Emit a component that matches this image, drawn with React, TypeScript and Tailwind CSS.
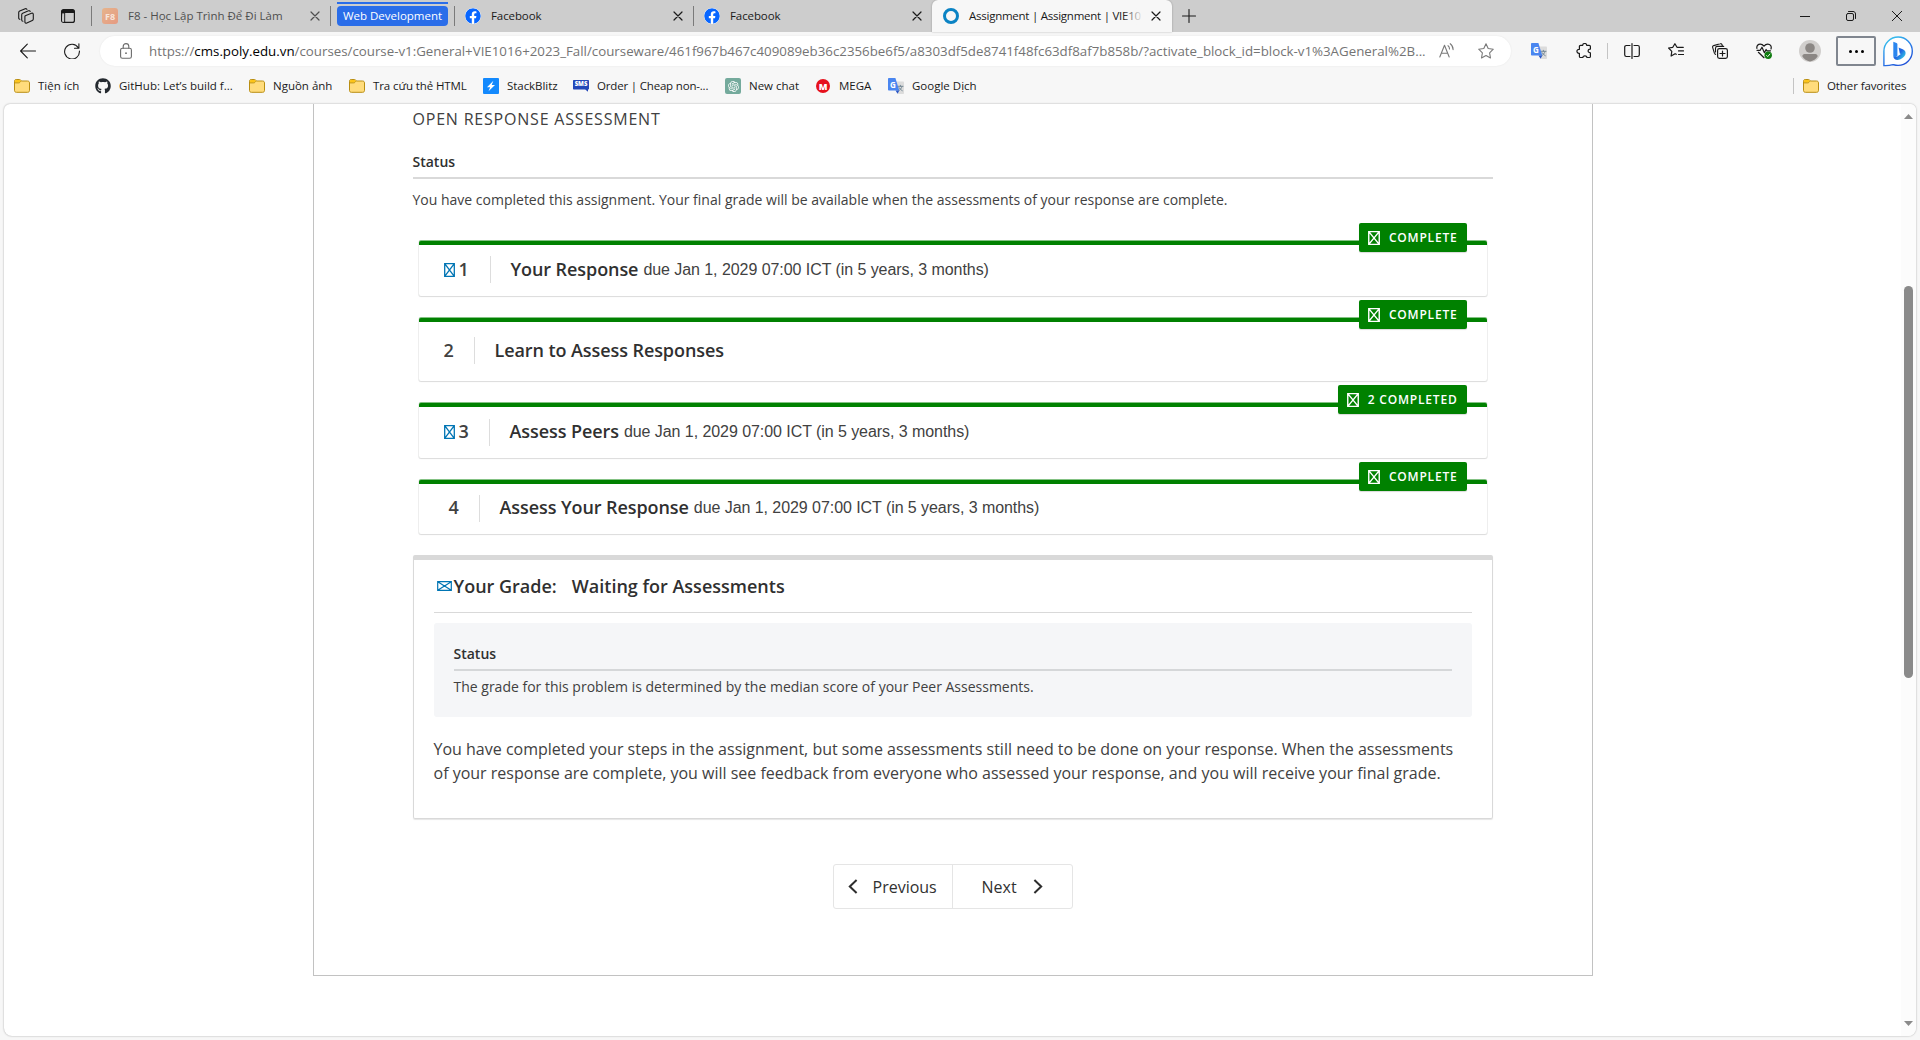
import React from "react";
import { FaFacebook, FaGithub } from "react-icons/fa";
import { RiOpenaiFill } from "react-icons/ri";

/* ---------- browser icons ---------- */

const line = {
  fill: "none",
  stroke: "currentColor",
  strokeLinecap: "round" as const,
  strokeLinejoin: "round" as const,
};

const FolderIcon = () => (
  <svg className="size-4 shrink-0" viewBox="0 0 16 16">
    <path d="M.5 3.2C.5 2 1.100 1.500 2.200 1.500h3.300c.7 0 1 .3 1.400.8l.6.700h6c1.300 0 2 .7 2 2v7.300c0 1.400-.7 2-2 2h-11c-1.300 0-2-.6-2-2z" fill="#ffdc7c" stroke="#b98e12" />
    <path d="M1 3.200C1 2.400 1.500 2 2.200 2h3.200c.7 0 1.100.6 1.600 1.200L5.800 4.300c-.3.300-.6.400-1 .4H1z" fill="#fcc419" />
    <path d="M.9 4.900h3.800c.5 0 .9-.2 1.200-.5l1.300-1.300" fill="none" stroke="#b98e12" strokeWidth=".9" />
  </svg>
);

const TranslateIcon = () => (
  <span className="relative block size-4 shrink-0">
    <svg className="size-4" viewBox="0 0 16 16">
      <path d="M6 3.500h9.200c.5 0 .8.3.8.800v10.900c0 .5-.3.800-.8.800H10z" fill="#dcdcdc" />
      <path d="M9.800 8.300h5.200M12.400 7.300v1M14 8.500c-.5 2-1.900 3.300-3.200 4.100M11 9.600c.7 1.300 1.900 2.400 3.300 3.100" {...line} stroke="#6d8290" strokeWidth=".9" />
      <path d="M.8 0h6.600l3.900 12.500H.8c-.5 0-.8-.3-.8-.8V.8C0 .3.300 0 .8 0z" fill="#4a86f0" />
      <path d="M7.500 12.500h3.800L9.600 15.700z" fill="#2a56c6" />
    </svg>
    <span className="absolute left-[2px] top-[2px] text-[8px] font-bold leading-[9px] text-white">G</span>
  </span>
);

const CloseIcon = () => (
  <svg className="size-[10px] shrink-0" viewBox="0 0 10 10">
    <path d="M1 1l8 8M9 1L1 9" {...line} strokeWidth="1.200" />
  </svg>
);

/* ---------- tab strip ---------- */

function Separator() {
  return <span className="h-5 w-px shrink-0 bg-[#7a7a7a]" />;
}

function Tab({ icon, title, width }: { icon: React.ReactNode; title: string; width: string }) {
  return (
    <div className={`flex h-8 shrink-0 items-center pl-[10px] pr-[10px] ${width}`}>
      {icon}
      <span className="ml-[10px] flex-1 whitespace-nowrap pb-px">{title}</span>
      <CloseIcon />
    </div>
  );
}

function TabStrip() {
  return (
    <div className="flex h-8 items-center bg-[#cdcdcd] text-[11.5px] leading-[17px] text-[#1a1a1a]">
      <div className="flex w-[91px] shrink-0 items-center pl-[18px]">
        <svg className="size-4" viewBox="0 0 16 16">
          <g {...line} strokeWidth="1.100">
            <path d="M7.300 7.700l6.200-2.500c.9-.3 1.800.2 1.800 1.200v4.700c0 .7-.3 1.200-1 1.500l-5.500 2.500c-.9.4-1.900-.1-1.900-1.100V8.600c0-.4.1-.7.4-.9z" />
            <path d="M4.900 13.300c-.7 0-1.200-.5-1.200-1.200V6.800c0-.7.300-1.200 1-1.500l5.800-2.500c.8-.3 1.500 0 1.700.7" />
            <path d="M1.900 11.200c-.7 0-1.200-.5-1.200-1.200V4.600c0-.7.300-1.200 1-1.500L7.200.7c.8-.3 1.500 0 1.700.7" />
          </g>
        </svg>
        <svg className="ml-[27px] size-[14px]" viewBox="0 0 14 14">
          <rect x=".6" y=".6" width="12.800" height="12.800" rx="2" {...line} strokeWidth="1.200" />
          <path d="M.6 4V2.600c0-1.200.8-2 2-2h8.800c1.200 0 2 .8 2 2V4zM.6 4h3.200v9.400" fill="currentColor" stroke="none" />
          <path d="M3.600 4v9" {...line} strokeWidth="1.100" />
          <rect x="1.200" y="4.400" width="2" height="8.200" fill="#cdcdcd" />
        </svg>
      </div>
      <Separator />
      <Tab
        width="w-[238px] text-[#4f4f4f]"
        title="F8 - Học Lập Trình Để Đi Làm"
        icon={
          <span className="grid size-4 place-items-center rounded-[3px] bg-linear-to-br from-[#e6b48c] to-[#e59a82] text-[9px] font-bold leading-none text-[#f8e4da]">
            F8
          </span>
        }
      />
      <Separator />
      <div className="flex h-8 w-[123px] shrink-0 flex-col items-start pl-[6px] pt-[2px]">
        <span className="h-[2px] w-[111px] bg-[#2a6de9]" />
        <span className="mt-[2px] flex h-5 w-[111px] items-center justify-center rounded-[4px] bg-[#2a6de9] pb-px text-white">
          Web Development
        </span>
      </div>
      <Separator />
      <Tab width="w-[238px] tracking-[-0.1px]" title="Facebook" icon={<FaFacebook className="size-4 rounded-full bg-white text-[#0866ff]" />} />
      <Separator />
      <Tab width="w-[238px] tracking-[-0.1px]" title="Facebook" icon={<FaFacebook className="size-4 rounded-full bg-white text-[#0866ff]" />} />
      <div className="flex h-8 w-[240px] shrink-0 items-center rounded-t-[6px] bg-[#f7f7f7] pl-[11px] pr-[11px] shadow-[0_0_2px_rgba(0,0,0,0.3)]">
        <span className="size-4 shrink-0 rounded-full border-[3px] border-[#0b83c4]" />
        <span className="relative ml-[10px] w-[174px] whitespace-nowrap pb-px tracking-[-0.25px]">
          Assignment | Assignment | VIE10
          <span className="absolute inset-y-0 right-0 w-5 bg-linear-to-r from-transparent to-[#f7f7f7]" />
        </span>
        <span className="ml-auto flex">
          <CloseIcon />
        </span>
      </div>
      <svg className="ml-[10px] size-[14px]" viewBox="0 0 14 14">
        <path d="M7 .5v13M.5 7h13" {...line} strokeWidth="1.100" />
      </svg>
      <div className="ml-auto flex items-center gap-9 pr-[18px]">
        <svg className="size-[10px]" viewBox="0 0 10 10">
          <path d="M0 5.500h10" stroke="currentColor" />
        </svg>
        <svg className="size-[10px]" viewBox="0 0 10 10">
          <rect x=".5" y="2.500" width="7" height="7" rx="1.500" {...line} />
          <path d="M2.500.5H7c1.500 0 2.500 1 2.500 2.500v4.500" {...line} />
        </svg>
        <svg className="size-[10px]" viewBox="0 0 10 10">
          <path d="M.3.3l9.400 9.400M9.700.3L.3 9.700" {...line} />
        </svg>
      </div>
    </div>
  );
}

/* ---------- address bar ---------- */

function Toolbar() {
  return (
    <div className="flex h-[38px] items-center text-[#1a1a1a]">
      <svg className="ml-5 size-4 shrink-0" viewBox="0 0 16 16">
        <path d="M15.500 8H.7M7.300 1.200L.6 8l6.700 6.800" {...line} strokeWidth="1.100" />
      </svg>
      <svg className="ml-7 size-4 shrink-0" viewBox="0 0 16 16">
        <path d="M14.300 4.700A7.400 7.400 0 1 0 15.400 8M14.900.8v4.400h-4.400" {...line} strokeWidth="1.100" />
      </svg>
      <div className="ml-5 flex h-[30px] w-[1411px] shrink-0 items-center rounded-full bg-white pl-5 shadow-[0_0_2px_rgba(0,0,0,0.08)]">
        <svg className="h-4 w-3 shrink-0 text-[#6b6b6b]" viewBox="0 0 12 16">
          <rect x=".6" y="5.200" width="10.800" height="10" rx="1.800" {...line} strokeWidth="1.100" />
          <path d="M3.200 5.200V3.400a2.800 2.800 0 0 1 5.600 0v1.800" {...line} strokeWidth="1.100" />
          <circle cx="6" cy="10.200" r=".9" fill="currentColor" />
        </svg>
        <span className="ml-[17px] w-[1278px] shrink-0 whitespace-nowrap text-[13.3px] leading-[18px] text-[#747474]">
          https://<span className="text-black">cms.poly.edu.vn</span>
          /courses/course-v1:General+VIE1016+2023_Fall/courseware/461f967b467c409089eb36c2356be6f5/a8303df5de8741f48fc63df8af7b858b/?activate_block_id=block-v1%3AGeneral%2B...
        </span>
        <svg className="ml-3 size-4 shrink-0 text-[#7a7a7a]" viewBox="0 0 16 16">
          <path d="M.8 14L5.500 2.300 10.200 14M2.300 10.200h6.400" {...line} strokeWidth="1.100" />
          <path d="M9 2.700c.9.600 1.500 1.800 1.500 3.200M11.200.7c1.800 1.200 2.900 3.300 2.900 5.900" {...line} strokeWidth="1.100" />
        </svg>
        <svg className="ml-[23px] size-4 shrink-0 text-[#7a7a7a]" viewBox="0 0 16 16">
          <path d="M8 .8l2.200 4.700 5.100.7-3.700 3.600.9 5.200L8 12.500 3.500 15l.9-5.200L.7 6.200l5.100-.7z" {...line} strokeWidth="1.100" />
        </svg>
      </div>
      <div className="ml-5 flex items-center">
        <TranslateIcon />
        <svg className="ml-[29px] size-4" viewBox="0 0 16 16">
          <path d="M4.500 2.300h2.200c0-2.400 4-2.400 4 0h2.600c.7 0 1.100.4 1.100 1.100v2.700c-2.700-.6-3.300 3.800 0 3.700v3.600c0 .7-.4 1.100-1.100 1.100h-2.400c.1-2-4-2.300-4 0H4.500c-.7 0-1.100-.4-1.100-1.100V10.300c-3.300.4-3.300-4.400 0-4V3.400c0-.7.400-1.100 1.100-1.100z" {...line} strokeWidth="1.200" />
        </svg>
        <span className="ml-[15px] h-4 w-px bg-[#c4c4c4]" />
        <svg className="ml-4 size-4" viewBox="0 0 16 16">
          <path d="M6 2.500H2.300C1.300 2.500.700 3.200.7 4.100v7.700c0 1 .6 1.700 1.600 1.700H6M10 2.500h3.700c1 0 1.600.7 1.600 1.600v7.700c0 1-.6 1.700-1.600 1.700H10M8 .6v14.800" {...line} strokeWidth="1.200" />
        </svg>
        <svg className="ml-7 size-4" viewBox="0 0 16 16">
          <path d="M8.300 11.300l-1.200-.6-4 2.300.7-4.700L.6 5l4.200-.7L6.900.7l2.100 3.600h6.300M10.500 7.900h5M10.500 11.500h5" {...line} strokeWidth="1.200" />
        </svg>
        <svg className="ml-7 size-4" viewBox="0 0 16 16">
          <rect x="5.600" y="5.600" width="9.800" height="9.800" rx="1.800" {...line} strokeWidth="1.200" />
          <path d="M10.500 8v5M8 10.500h5" {...line} strokeWidth="1.200" />
          <path d="M3.600 11.400c-.7-.2-1-.6-1.200-1.200L.7 4.600c-.3-.9.1-1.700 1-2L8 .8c.9-.3 1.700.1 2 1l.6 1.600M3.500 9V5.300c0-1.200.7-1.900 1.900-1.900h6.300" {...line} strokeWidth="1.100" />
        </svg>
        <svg className="ml-7 size-4" viewBox="0 0 16 16">
          <path d="M.9 5.400c-.5-2.700 1.300-4.300 3.300-4.300C6 1.100 7.100 2 8 3.200 8.900 2 10 1.100 11.800 1.100c2.200 0 4.100 2 3.200 4.900M1 7.300h3.200L6 4.200l2.400 5.500 1.700-3.200.9 1.300h3.500M2.400 9.300L8 14.700" {...line} strokeWidth="1.200" />
          <circle cx="12.200" cy="12.300" r="3.700" fill="#107c10" />
          <path d="M10.600 12.500l1.100 1.100 2.200-2.500" {...line} stroke="#fff" strokeWidth=".9" />
        </svg>
        <svg className="ml-[27px] size-[22px]" viewBox="0 0 22 22">
          <circle cx="11" cy="11" r="11" fill="#d1cfcd" />
          <circle cx="11" cy="8" r="4.800" fill="#8b8784" />
          <path d="M3.300 16.300c0-1.300 1-2.300 2.300-2.300h10.800c1.300 0 2.300 1 2.300 2.300A11 11 0 0 1 11 21.500a11 11 0 0 1-7.700-5.200z" fill="#8b8784" />
        </svg>
        <span className="ml-[15px] flex h-[30px] w-10 items-center justify-center gap-[3px] rounded-[2px] border-2 border-[#80868f]">
          <span className="size-[3px] rounded-full bg-black" />
          <span className="size-[3px] rounded-full bg-black" />
          <span className="size-[3px] rounded-full bg-black" />
        </span>
        <svg className="ml-[7px] h-[31px] w-[30px]" viewBox="0 0 30 31">
          <defs>
            <linearGradient id="ring" x1="0" y1="0" x2=".6" y2="1">
              <stop offset="0" stopColor="#39d0ee" />
              <stop offset=".6" stopColor="#2a7de8" />
              <stop offset="1" stopColor="#2355d8" />
            </linearGradient>
            <linearGradient id="bee" x1="0" y1="0" x2="1" y2=".8">
              <stop offset="0" stopColor="#2b8bf0" />
              <stop offset=".5" stopColor="#2062e0" />
              <stop offset="1" stopColor="#36d3e6" />
            </linearGradient>
          </defs>
          <path d="M.9 29.600V15.200A14.200 14.200 0 1 1 15 29.400c-2.200 0-3.400-.4-5-.8-3 .8-6 1.200-9.100 1z" fill="#fff" stroke="url(#ring)" strokeWidth="1.400" />
          <path d="M10.300 5.800l3.200 1.300c.6.300.9.700.9 1.300v10.800l-1.900 3.300c-1.300-.5-2.200-1.300-2.200-3z" fill="#2b86ee" />
          <path d="M15.600 11.500l4.600 2.100c2.200 1.100 3 3.300 2 5.500-1.200 2.700-4.400 4.500-7.500 5-2.300.2-4-1.200-4.300-3.500 1 1 2.600.9 3.900 0l3.600-2.500-1.100-.7z" fill="url(#bee)" />
        </svg>
      </div>
    </div>
  );
}

/* ---------- bookmarks bar ---------- */

function Bookmark({ icon, label, width }: { icon: React.ReactNode; label: string; width: string }) {
  return (
    <div className={`flex shrink-0 items-center gap-2 whitespace-nowrap ${width}`}>
      {icon}
      <span className="pb-px">{label}</span>
    </div>
  );
}

function BookmarksBar() {
  return (
    <div className="flex h-8 items-center pl-[14px] pr-[14px] text-[11.5px] leading-[17px] text-[#1a1a1a]">
      <Bookmark width="w-[81px]" label="Tiện ích" icon={<FolderIcon />} />
      <Bookmark width="w-[154px]" label="GitHub: Let’s build f..." icon={<FaGithub className="size-4 text-[#24292f]" />} />
      <Bookmark width="w-[100px]" label="Nguồn ảnh" icon={<FolderIcon />} />
      <Bookmark width="w-[134px] tracking-[-0.1px]" label="Tra cứu thẻ HTML" icon={<FolderIcon />} />
      <Bookmark
        width="w-[90px] tracking-[-0.05px]"
        label="StackBlitz"
        icon={
          <svg className="size-4 shrink-0" viewBox="0 0 16 16">
            <rect width="16" height="16" rx="1" fill="#1389fd" />
            <path d="M4 9.200h3.200L5.500 13.300 12 6.900H8.700l1.700-4.100z" fill="#fff" />
          </svg>
        }
      />
      <Bookmark
        width="w-[152px] tracking-[-0.18px]"
        label="Order | Cheap non-..."
        icon={
          <span className="relative h-3 w-4 shrink-0">
            <svg className="block h-3 w-4" viewBox="0 0 16 12">
              <path d="M1 0h14c.6 0 1 .4 1 1v7.500c0 .6-.4 1-1 1v2.300l-2.800-2.300H1c-.6 0-1-.4-1-1V1c0-.6.4-1 1-1z" fill="#2346b8" />
            </svg>
            <span className="absolute inset-x-0 top-[1px] text-center text-[6px] font-extrabold leading-[7px] tracking-normal text-white">SMS</span>
          </span>
        }
      />
      <Bookmark
        width="w-[90px]"
        label="New chat"
        icon={
          <span className="grid size-4 place-items-center rounded-[2px] bg-[#74aa9c]">
            <RiOpenaiFill className="size-[13px] text-white" />
          </span>
        }
      />
      <Bookmark
        width="w-[73px]"
        label="MEGA"
        icon={
          <span className="mx-px grid size-[14px] place-items-center rounded-full bg-[#e6111c] text-[9px] font-extrabold leading-none text-white">
            M
          </span>
        }
      />
      <Bookmark width="w-[100px]" label="Google Dịch" icon={<TranslateIcon />} />
      <span className="ml-auto mr-[9px] h-4 w-px bg-[#c4c4c4]" />
      <Bookmark width="w-[103px] tracking-[-0.1px]" label="Other favorites" icon={<FolderIcon />} />
    </div>
  );
}

/* ---------- assignment page ---------- */

/* Box drawn in place of an icon-font glyph that is not available. */
function MissingGlyph({ className }: { className: string }) {
  return (
    <svg className={className} viewBox="0 0 11 14" preserveAspectRatio="none">
      <path d="M.7.700h9.600v12.600H.7zM.7.700l9.600 12.600M10.300.7L.7 13.300" fill="none" stroke="currentColor" strokeWidth="1.300" />
    </svg>
  );
}

type Step = {
  number: string;
  numberBox: string;
  title: string;
  due?: string;
  status: string;
  edited?: boolean;
  card: string;
  text: string;
  dueLine: string;
};

const DUE = "due Jan 1, 2029 07:00 ICT (in 5 years, 3 months)";

const STEPS: Step[] = [
  { number: "1", numberBox: "w-[71px] pl-[25px]", title: "Your Response", due: DUE, status: "COMPLETE", edited: true, card: "h-[55px] pt-[11px]", text: "pt-px", dueLine: "leading-[27px]" },
  { number: "2", numberBox: "w-[55px] pl-[25px]", title: "Learn to Assess Responses", status: "COMPLETE", card: "h-[63px] pt-[15px]", text: "pt-px", dueLine: "leading-[27px]" },
  { number: "3", numberBox: "w-[70px] pl-[25px]", title: "Assess Peers", due: DUE, status: "2 COMPLETED", edited: true, card: "h-[55px] pt-3", text: "", dueLine: "leading-[25px]" },
  { number: "4", numberBox: "w-[60px] pl-[30px]", title: "Assess Your Response", due: DUE, status: "COMPLETE", card: "h-[54px] pt-[11px]", text: "", dueLine: "leading-[25px]" },
];

function StepCard({ step }: { step: Step }) {
  return (
    <section
      className={`relative rounded-[2px] border-t-[4px] border-[#008100] bg-white shadow-[0_-1px_0_#84c284,0_1px_1px_#dcdcdc,0_0_0_1px_#f0f0f0] ${step.card}`}
    >
      <div className="flex h-[27px] whitespace-nowrap text-lg leading-6 font-semibold text-[#303030]">
        <div className={`flex shrink-0 ${step.numberBox} ${step.text}`}>
          {step.edited && <MissingGlyph className="mr-1 mt-[6px] h-[14px] w-[11px] shrink-0 text-[#0075b4]" />}
          <span className="text-[#414141]">{step.number}</span>
        </div>
        <span className="h-[27px] w-px shrink-0 bg-[#dddddd]" />
        <h3 className={`ml-5 tracking-[-0.08px] ${step.text}`}>{step.title}</h3>
        {step.due && (
          <span className={`ml-[5px] font-['Liberation_Sans',sans-serif] text-base font-normal tracking-[-0.06px] text-[#414141] ${step.dueLine}`}>
            {step.due}
          </span>
        )}
      </div>
      <div className="absolute -top-[22px] right-5 flex h-[29px] items-center rounded-[2px] bg-[#008100] pl-[9px] pr-[9px] text-xs leading-[17px] font-semibold tracking-[0.8px] text-white shadow-[0_1px_1px_rgba(0,0,0,0.15)]">
        <MissingGlyph className="mr-[9px] h-[14px] w-3 shrink-0" />
        {step.status}
      </div>
    </section>
  );
}

function GradeBox() {
  return (
    <section className="mt-[21px] h-[264px] rounded-[2px] border border-t-[5px] border-[#d9d9d9] px-5 pt-[14px] shadow-[0_1px_1px_rgba(0,0,0,0.1)]">
      <div className="flex h-[39px] whitespace-nowrap border-b border-[#d9d9d9] text-lg leading-6 font-semibold text-[#303030]">
        <svg className="ml-[3px] mt-[7px] h-[10px] w-[15px] text-[#0075b4]" viewBox="0 0 15 10">
          <path d="M.7.700h13.600v8.600H.7zM.7.700l13.600 8.600M14.300.7L.7 9.300" fill="none" stroke="currentColor" strokeWidth="1.200" />
        </svg>
        <span className="ml-[2px]">Your Grade:</span>
        <span className="ml-[15px]">Waiting for Assessments</span>
      </div>
      <div className="mt-[10px] h-[94px] rounded-[3px] bg-[#f5f6f8] px-5 pt-[21px] text-sm leading-[19px]">
        <h4 className="h-[27px] border-b-2 border-[#d5d7d9] font-semibold text-[#303030]">Status</h4>
        <p className="mt-[6px]">The grade for this problem is determined by the median score of your Peer Assessments.</p>
      </div>
      <p className="mt-5 whitespace-nowrap text-base leading-6">
        You have completed your steps in the assignment, but some assessments still need to be done on your response. When the assessments
        <br />
        of your response are complete, you will see feedback from everyone who assessed your response, and you will receive your final grade.
      </p>
    </section>
  );
}

function Pager() {
  return (
    <nav className="mx-auto mt-[45px] flex h-[45px] w-[240px] rounded-[3px] border border-[#e5e5e5] text-base leading-6 text-[#414141]">
      <button className="flex w-[119px] items-center border-r border-[#e5e5e5] pl-[14px]">
        <svg className="h-[15px] w-[10px]" viewBox="0 0 10 15">
          <path d="M8.600 1L1.800 7.500l6.800 6.500" fill="none" stroke="#2d2d2d" strokeWidth="2" />
        </svg>
        <span className="ml-[15px] text-[#313131]">Previous</span>
      </button>
      <button className="flex flex-1 items-center pl-[29px]">
        <span className="text-[#313131]">Next</span>
        <svg className="ml-4 h-[15px] w-[10px]" viewBox="0 0 10 15">
          <path d="M1.400 1l6.800 6.500L1.400 14" fill="none" stroke="#2d2d2d" strokeWidth="2" />
        </svg>
      </button>
    </nav>
  );
}

function Page() {
  return (
    <main className="mx-1 mt-[2px] flex h-[932px] overflow-hidden rounded-b-[8px] rounded-t-[6px] bg-white text-[#414141] shadow-[0_0_2px_rgba(0,0,0,0.35)]">
      <div className="flex-1">
        <div className="ml-[308.5px] h-[872px] w-[1280px] border border-t-0 border-[#c2c2c2] px-[99px] pt-[3px]">
          <h2 className="text-base leading-6 tracking-[0.8px]">OPEN RESPONSE ASSESSMENT</h2>
          <h4 className="mt-[21px] h-[27px] border-b-2 border-[#d9d9d9] text-sm leading-[19px] font-semibold text-[#303030]">Status</h4>
          <p className="mt-[11px] text-sm leading-[19px]">
            You have completed this assignment. Your final grade will be available when the assessments of your response are complete.
          </p>
          <div className="mx-[6px] mt-8 flex flex-col gap-[22px]">
            {STEPS.map((step) => (
              <StepCard key={step.number} step={step} />
            ))}
          </div>
          <GradeBox />
          <Pager />
        </div>
      </div>
      <div className="flex w-[15px] flex-col items-center bg-[#fcfcfc] pt-[10px]">
        <svg className="h-[5px] w-[9px]" viewBox="0 0 9 5">
          <path d="M0 5L4.500 0 9 5z" fill="#8a8a8a" />
        </svg>
        <span className="mt-[167px] h-[392px] w-[9px] rounded-full bg-[#8a8a8a]" />
        <svg className="mt-[343px] h-[5px] w-[9px]" viewBox="0 0 9 5">
          <path d="M0 0l4.500 5L9 0z" fill="#8a8a8a" />
        </svg>
      </div>
    </main>
  );
}

export default function App() {
  return (
    <div className="h-[1040px] w-[1920px] overflow-hidden bg-[#f7f7f7] font-['Open_Sans','Noto_Sans',sans-serif]">
      <TabStrip />
      <Toolbar />
      <BookmarksBar />
      <Page />
    </div>
  );
}
